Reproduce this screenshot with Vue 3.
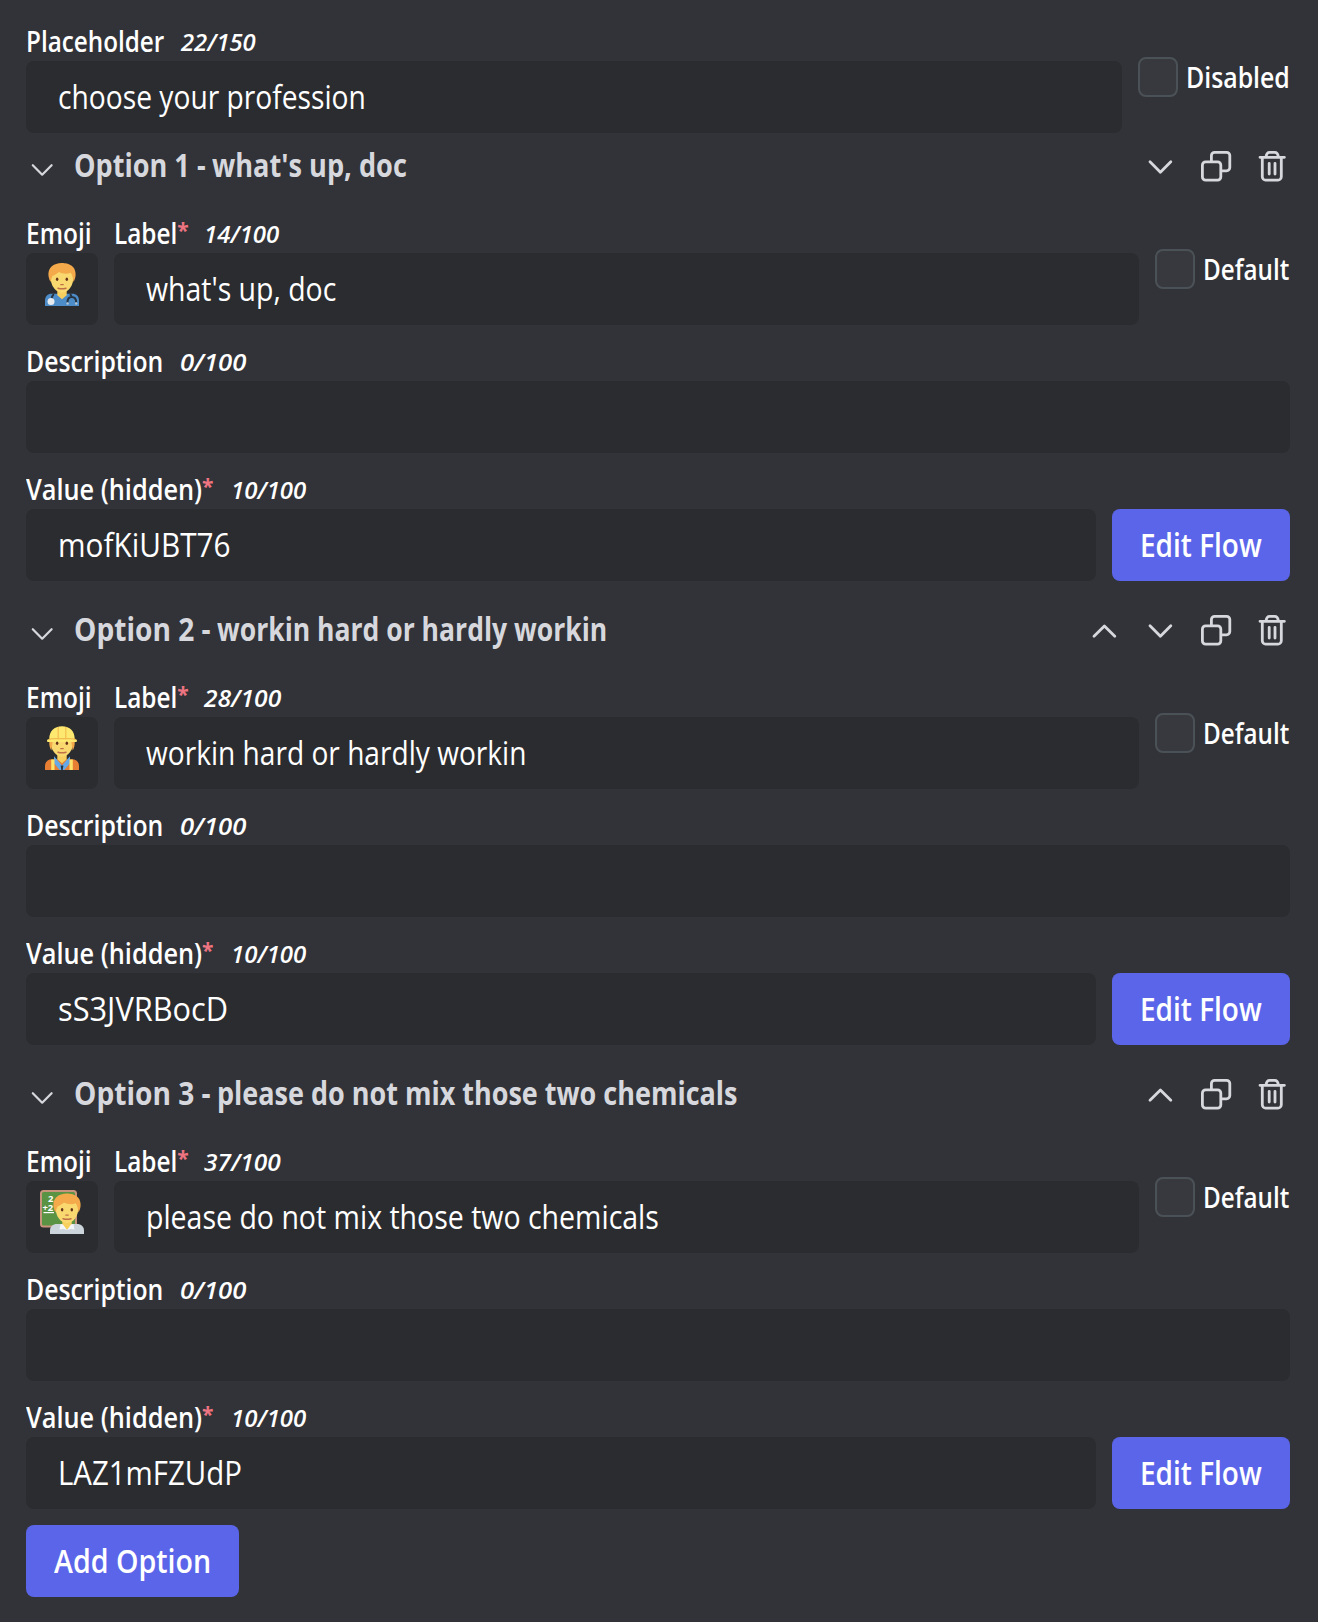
<script setup>
import { defineComponent, h } from 'vue'

const ctx = document.createElement('canvas').getContext('2d')

// Text set in a narrowed cut: `w` is the drawn width of the glyphs.
const Fit = defineComponent({
  props: { t: String, w: Number, size: Number, weight: Number, italic: Boolean },
  setup(p) {
    return () => {
      ctx.font = `${p.italic ? 'italic ' : ''}${p.weight} ${p.size}px "Open Sans"`
      const m = ctx.measureText(p.t)
      const k = p.w / (m.actualBoundingBoxLeft + m.actualBoundingBoxRight)
      return h('span', {
        style: {
          display: 'inline-block',
          whiteSpace: 'pre',
          fontSize: p.size + 'px',
          fontWeight: p.weight,
          fontStyle: p.italic ? 'italic' : 'normal',
          width: (m.width * k).toFixed(2) + 'px',
          transformOrigin: '0 0',
          transform: `scaleX(${k.toFixed(4)})`
        }
      }, p.t)
    }
  }
})

const options = [
  { name: 'Option 1 -', nameW: 130.5, titleW: 194.5, label: "what's up, doc", labelW: 190, count: '14/100', countW: 73, value: 'mofKiUBT76', valueW: 169.5, emoji: 'doctor', up: false, down: true },
  { name: 'Option 2 -', nameW: 135.5, titleW: 388.5, label: 'workin hard or hardly workin', labelW: 379, count: '28/100', countW: 78, value: 'sS3JVRBocD', valueW: 168, emoji: 'worker', up: true, down: true },
  { name: 'Option 3 -', nameW: 135.5, titleW: 518, label: 'please do not mix those two chemicals', labelW: 510, count: '37/100', countW: 76.5, value: 'LAZ1mFZUdP', valueW: 180, emoji: 'teacher', up: true, down: false }
]
</script>

<template>
  <main class="editor">
    <section class="row">
      <div class="field grow">
        <label class="caption"><Fit t="Placeholder" :w="136.4" :size="28" :weight="600" /><Fit class="count" t="22/150" :w="75.5" :size="24" :weight="560" italic /></label>
        <div class="input"><Fit t="choose your profession" :w="305.5" :size="32" :weight="420" /></div>
      </div>
      <div class="check"><i class="box"></i><Fit t="Disabled" :w="100.8" :size="28" :weight="600" /></div>
    </section>

    <section v-for="o in options" :key="o.name" class="option">
      <header class="head">
        <svg class="fold" viewBox="0 0 26 16"><path d="M3.8 3.2 13.2 12.7 22.6 3.2" /></svg>
        <h2 class="title"><Fit :t="o.name" :w="o.nameW" :size="32" :weight="700" /><Fit :t="o.label" :w="o.titleW" :size="32" :weight="700" /></h2>
        <div class="actions">
          <svg v-if="o.up" viewBox="0 0 36 36"><path d="M8 24.3 18.4 13.9 28.8 24.3" /></svg>
          <svg v-if="o.down" viewBox="0 0 36 36"><path d="M8 13.7 18.4 24.2 28.8 13.7" /></svg>
          <svg viewBox="0 0 36 36">
            <rect x="4.4" y="13.8" width="18.4" height="18.4" rx="3.2" />
            <path d="M13.4 13.5V7.6a3.2 3.2 0 0 1 3.2-3.2h12a3.2 3.2 0 0 1 3.2 3.2v12a3.2 3.2 0 0 1-3.2 3.2h-5.2" />
          </svg>
          <svg viewBox="0 0 36 36">
            <path d="M6 9.3h24.4M8.3 9.5v19.3a3.3 3.3 0 0 0 3.3 3.3h12.4a3.3 3.3 0 0 0 3.3-3.3V9.5M12 9c.4-3 1.5-4.7 3.7-4.7h5c2.2 0 3.3 1.7 3.7 4.7M15.2 15.3v10.8M21 15.3v10.8" />
          </svg>
        </div>
      </header>

      <div class="row">
        <div class="field emoji-field">
          <label class="caption"><Fit t="Emoji" :w="62.2" :size="28" :weight="600" /></label>
          <div class="emoji">
            <svg viewBox="0 0 44 44">
              <g v-if="o.emoji === 'teacher'">
                <rect x="1" y="1" width="35" height="35.6" rx="2.5" fill="#5b9345" stroke="#c9947c" stroke-width="2" />
                <text class="sum"><tspan x="8" y="11.8">2</tspan><tspan x="2.4" y="20.8">+2</tspan></text>
                <path d="M3.5 22.6h10.5" stroke="#fff" stroke-width="1.2" />
              </g>
              <g :transform="o.emoji === 'teacher' ? 'translate(5 2.5)' : undefined">
                <path v-if="o.emoji === 'doctor'" d="M5 44v-5.5c0-4 2.8-6.7 6.5-6.7h21c3.7 0 6.5 2.7 6.5 6.7V44z" fill="#4c8cc9" />
                <path v-if="o.emoji === 'worker'" d="M5 44v-4c0-4.2 3-6.8 7-6.8h20c4 0 7 2.6 7 6.8v4z" fill="#e67e33" />
                <path v-if="o.emoji === 'teacher'" d="M5 41.5v-3.5c0-4 3-6.5 7-6.5h20c4 0 7 2.5 7 6.5v3.5z" fill="#ccd4dc" />
                <path v-if="o.emoji === 'worker'" d="M15 33 22 41 29 33v4L23 44h-2l-6-7z" fill="#66a9e6" stroke="#66a9e6" stroke-width="2" />
                <path d="M17.3 27h9.4v6.2L22 37.3 17.3 33.2z" fill="#f6cf5f" />
                <path d="M10.5 14c0-6 4.5-9 11.5-9s11.5 3 11.5 9c0 4-.8 9-3.8 12.6-2 2.5-4.7 4.1-7.7 4.1s-5.7-1.6-7.7-4.1C11.3 23 10.5 18 10.5 14z" fill="#f9d96f" />
                <path v-if="o.emoji !== 'worker'" d="M10.6 20c-3-5.5-3-11.5.7-15.3C14.6 1.5 20 .5 24.5 1.2c3 .2 7 1.5 9 4.2 3 4 2.7 10.4-.1 14.6-.3-4-1.1-7.3-2.7-9.3-4 1.8-8.5.8-11.7-.7-2 1.8-4.4 3.1-6.5 4-.8 1.7-1.4 3.5-1.9 6z" fill="#f4a94b" />
                <g v-else>
                  <path d="M9.3 15c-.3 4 .7 7.5 2 9.5l1.5-9.5zM34.7 15c.3 4-.7 7.5-2 9.5L31.2 15z" fill="#f4a94b" />
                  <path d="M9.3 13C9.3 5 14 .2 22 .2S34.7 5 34.7 13l2 .8c.5.6.3 2.2-.5 2.2H7.8c-.8 0-1-1.6-.5-2.2z" fill="#fde96f" />
                  <path d="M18.2 1v12.4M25.8 1v12.4M8.6 13.6c2-.8 3.5-.9 5.5-.9h16c2 0 3.5.1 5.5.9" fill="none" stroke="#f2bd50" stroke-width="1.2" />
                </g>
                <ellipse cx="17.1" cy="17.2" rx="1.25" ry="1.8" fill="#66301a" />
                <ellipse cx="26.8" cy="17.2" rx="1.25" ry="1.8" fill="#66301a" />
                <path d="M20.7 22.6h2.6" stroke="#bf7048" stroke-width="1.2" stroke-linecap="round" />
                <path d="M18 26.2c2.6.8 5.4.8 8 0" fill="none" stroke="#bf7048" stroke-width="1.5" stroke-linecap="round" />
                <g v-if="o.emoji === 'doctor'" fill="none">
                  <path d="M13.8 32c-1.7 1.5-2.1 3.5-2.3 6M30 32c1.2 1.2 1.5 2 1.7 3.3M27.5 40.5c0-3.5 1.6-5.5 4.2-5.5s4.5 2 4.5 5.5" stroke="#27333f" stroke-width="1.9" />
                  <circle cx="11" cy="39.5" r="3.5" fill="#e6ebf0" />
                  <circle cx="27.6" cy="41.5" r="1.2" fill="#b9c6d2" /><circle cx="36.2" cy="41.5" r="1.2" fill="#b9c6d2" />
                </g>
                <path v-if="o.emoji === 'worker'" d="M11.2 33.5h3.3V44h-3.3zM29.5 33.5h3.3V44h-3.3z" fill="#fde36a" />
                <path v-if="o.emoji === 'worker'" d="M20.6 39.5h2.8l-.7 4.5h-1.4z" fill="#293642" />
                <path v-if="o.emoji === 'teacher'" d="M15.5 31.5 14.5 37l3.8-.5 3.7 1-4-5.5zM28.5 31.5l1 5.5-3.8-.5-3.7 1 4-5.5z" fill="#f3f6f8" />
              </g>
            </svg>
          </div>
        </div>
        <div class="field grow">
          <label class="caption"><Fit t="Label" :w="60" :size="28" :weight="600" /><span class="star">*</span><Fit class="count near" :t="o.count" :w="o.countW" :size="24" :weight="560" italic /></label>
          <div class="input"><Fit :t="o.label" :w="o.labelW" :size="32" :weight="420" /></div>
        </div>
        <div class="check option-check"><i class="box"></i><Fit t="Default" :w="84.5" :size="28" :weight="600" /></div>
      </div>

      <div class="field spaced">
        <label class="caption"><Fit t="Description" :w="134" :size="28" :weight="600" /><Fit class="count" t="0/100" :w="65" :size="24" :weight="560" italic /></label>
        <div class="input"></div>
      </div>

      <div class="row spaced bottom">
        <div class="field grow">
          <label class="caption"><Fit t="Value (hidden)" :w="175.3" :size="28" :weight="600" /><span class="star">*</span><Fit class="count" t="10/100" :w="73" :size="24" :weight="560" italic /></label>
          <div class="input"><Fit :t="o.value" :w="o.valueW" :size="32" :weight="420" /></div>
        </div>
        <button class="btn edit"><Fit t="Edit Flow" :w="119" :size="32" :weight="600" /></button>
      </div>
    </section>

    <button class="btn add"><Fit t="Add Option" :w="155" :size="32" :weight="600" /></button>
  </main>
</template>

<style>
body { margin: 0; background: #323338; }
</style>

<style scoped>
.editor {
  box-sizing: border-box;
  width: 1318px;
  height: 1622px;
  padding: 25px 28px 0 26px;
  background: #323338;
  color: #fff;
  font-family: "Open Sans", "Noto Sans", sans-serif;
}
.row { display: flex; gap: 16px; }
.bottom { align-items: flex-end; }
.field { display: flex; flex-direction: column; }
.grow { flex: 1; min-width: 0; }
.emoji-field { width: 72px; }
.spaced { margin-top: 20px; }
.caption { display: flex; height: 36px; line-height: 32px; white-space: nowrap; }
.count { margin-left: 16.7px; line-height: 34px; }
.near { margin-left: 15px; }
.star { width: 12px; font-size: 21px; font-weight: 700; line-height: 26px; color: #ee7482; }
.input {
  box-sizing: border-box;
  height: 72px;
  padding: 0 32px 1px;
  border-radius: 8px;
  background: #2b2c2f;
  line-height: 71px;
}
.emoji {
  box-sizing: border-box;
  height: 72px;
  padding: 9px 14px;
  border-radius: 8px;
  background: #2b2c2f;
}
.emoji svg { display: block; width: 44px; height: 44px; }
.sum { font-size: 9.5px; font-weight: 700; fill: #fff; }
.check { display: flex; box-sizing: border-box; width: 152px; height: 40px; margin-top: 32px; line-height: 40px; }
.option-check { width: 135px; }
.box {
  box-sizing: border-box;
  flex: none;
  width: 40px;
  height: 40px;
  margin-right: 7.5px;
  border: 2px solid #4b5257;
  border-radius: 8px;
  background: #38393f;
}
.option + .option, .add { margin-top: 16px; }
.head { display: flex; height: 84px; color: #d7d8dd; }
.fold { width: 26px; height: 16px; margin: 29px 0 0 3px; stroke-width: 2.2; }
.head svg { fill: none; stroke: #d7d8dd; stroke-linecap: round; stroke-linejoin: round; }
.title { display: flex; gap: 6px; margin: 0 auto 0 19px; font-size: 32px; line-height: 63px; }
.actions { display: flex; gap: 20px; padding-top: 15px; }
.actions svg { width: 36px; height: 36px; stroke-width: 2.8; }
.btn {
  display: block;
  height: 72px;
  padding: 0 0 1px;
  border: 0;
  border-radius: 8px;
  background: #5b65ea;
  color: #fff;
  font-family: inherit;
  line-height: 71px;
}
.edit { width: 178px; }
.add { width: 213px; }
</style>
